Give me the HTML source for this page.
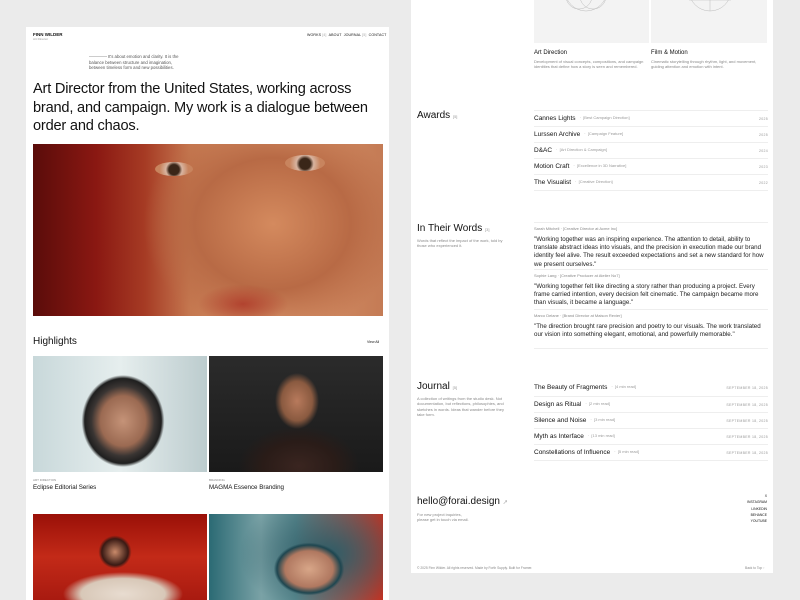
<!DOCTYPE html>
<html><head><meta charset="utf-8"><style>
*{margin:0;padding:0;box-sizing:border-box}
body{width:800px;height:600px;background:#ebebeb;position:relative;overflow:hidden;font-family:"Liberation Sans","Noto Sans CJK SC",sans-serif;color:#111}
.a{position:absolute}
.p{background:#fff}
.s{font-size:4px;color:#888}
.row{position:absolute;left:534px;width:234px;border-top:1px solid #eee;height:16px;white-space:nowrap}
.row b{font-weight:normal;font-size:6.5px;color:#111;position:absolute;left:0;top:4px}
.row b i{font-style:normal;font-size:4px;color:#999;margin-left:4px;vertical-align:1px}
.row u{text-decoration:none;font-size:3.5px;color:#999;position:absolute;right:0;top:6px;letter-spacing:.3px}
</style></head><body>
<div class="a p" style="left:26px;top:27px;width:363px;height:573px"></div>
<div class="a" style="left:33px;top:32px;font-size:4.5px;font-weight:bold">FINN WILDER</div>
<div class="a" style="left:33px;top:37px;font-size:3px;color:#999">Art Director</div>
<div class="a" style="left:307px;top:33px;font-size:3.6px;white-space:nowrap;letter-spacing:.1px">WORKS <span style="color:#aaa">[4]</span> &nbsp;ABOUT &nbsp;JOURNAL <span style="color:#aaa">[5]</span> &nbsp;CONTACT</div>
<div class="a" style="left:89px;top:56px;width:18px;border-top:1px solid #ccc"></div>
<div class="a" style="left:89px;top:54px;width:100px;font-size:4.3px;line-height:5.6px;color:#555;text-indent:19px">It's about emotion and clarity. It is the balance between structure and imagination, between timeless form and new possibilities.</div>
<div class="a" style="left:33px;top:80px;white-space:nowrap;font-size:14.6px;line-height:18.5px;letter-spacing:-.2px">Art Director from the United States, working across<br>brand, and campaign. My work is a dialogue between<br>order and chaos.</div>
<div class="a" style="left:33px;top:144px;width:350px;height:172px;background:radial-gradient(ellipse 60px 40px at 305px 300px,#e0a07d,transparent),radial-gradient(ellipse 50px 22px at 210px 160px,#b2432f,transparent 90%),radial-gradient(ellipse 130px 110px at 240px 80px,#d48a5e,#b86a45 60%,transparent),linear-gradient(90deg,#5a0c0a 0%,#8a1812 18%,#a63b24 32%,#c57850 45%,#d9946a 70%,#c47b55 100%)"></div>
<div class="a" style="left:155px;top:162px;width:38px;height:14px;border-radius:50%;background:radial-gradient(circle at 50% 55%,#3a2618 25%,#d8b4a0 40%,#c8845e 70%)"></div>
<div class="a" style="left:285px;top:155px;width:40px;height:16px;border-radius:50%;background:radial-gradient(circle at 50% 55%,#3a2618 25%,#d8b4a0 40%,#c8845e 70%)"></div>
<div class="a" style="left:33px;top:336px;font-size:10px">Highlights</div>
<div class="a" style="left:367px;top:340px;font-size:3.5px">View All</div>
<div class="a" style="left:33px;top:356px;width:174px;height:116px;background:radial-gradient(ellipse 45px 50px at 90px 65px,#c59378,#9b6a52 50%,#3a3533 70%,#1f1f1f 85%,transparent 92%),linear-gradient(90deg,#c8d8da,#e6eeee 50%,#bcccce)"></div>
<div class="a" style="left:209px;top:356px;width:174px;height:116px;background:radial-gradient(ellipse 22px 28px at 88px 45px,#b87a5c,#8a5a40 70%,transparent),radial-gradient(ellipse 60px 40px at 90px 110px,#3a2520,#2a1c18 60%,transparent),linear-gradient(#2b2b2b,#1a1a1a)"></div>
<div class="a" style="left:33px;top:478px;font-size:3px;color:#888">ART DIRECTION</div>
<div class="a" style="left:33px;top:484px;font-size:6.2px">Eclipse Editorial Series</div>
<div class="a" style="left:209px;top:478px;font-size:3px;color:#888">BRANDING</div>
<div class="a" style="left:209px;top:484px;font-size:6.2px">MAGMA Essence Branding</div>
<div class="a" style="left:33px;top:514px;width:174px;height:86px;background:radial-gradient(ellipse 60px 22px at 90px 80px,#e8dcd0,#d8c8b8 70%,transparent),radial-gradient(ellipse 22px 22px at 82px 38px,#c98a6a,#3a1a14 60%,transparent 75%),linear-gradient(#9a1008,#c32a18 50%,#a81a10)"></div>
<div class="a" style="left:209px;top:514px;width:174px;height:86px;background:radial-gradient(ellipse 40px 30px at 100px 55px,#d8a688,#b07860 60%,#1e4650 80%,transparent 88%),radial-gradient(ellipse 90px 60px at 120px 40px,#2f5c66,transparent),linear-gradient(90deg,#2b6a74,#7aa2a6 30%,#5a8a90 50%,#c8301f 100%)"></div>
<div class="a p" style="left:411px;top:0;width:362px;height:573px"></div>
<div class="a" style="left:534px;top:0;width:115px;height:43px;background:#f3f3f3;overflow:hidden"><svg width="115" height="43"><g fill="none" stroke="#bbb" stroke-width=".5"><circle cx="52" cy="-10" r="21"/><circle cx="45" cy="-4" r="13"/><circle cx="59" cy="-4" r="13"/></g></svg></div>
<div class="a" style="left:651px;top:0;width:116px;height:43px;background:#f3f3f3;overflow:hidden"><svg width="116" height="43"><g fill="none" stroke="#bbb" stroke-width=".5"><circle cx="59" cy="-10" r="21"/><line x1="38" y1="0" x2="80" y2="0"/><line x1="59" y1="0" x2="59" y2="11"/></g></svg></div>
<div class="a" style="left:534px;top:50px;font-size:6px">Art Direction</div>
<div class="a" style="left:534px;top:59px;width:110px;font-size:4px;line-height:5.3px;color:#888">Development of visual concepts, compositions, and campaign identities that define how a story is seen and remembered.</div>
<div class="a" style="left:651px;top:50px;font-size:6px">Film &amp; Motion</div>
<div class="a" style="left:651px;top:59px;width:112px;font-size:4px;line-height:5.3px;color:#888">Cinematic storytelling through rhythm, light, and movement, guiding attention and emotion with intent.</div>
<div class="a" style="left:417px;top:110px;font-size:10px">Awards <span style="font-size:4px;color:#999">[5]</span></div>
<div class="row" style="top:110px"><b>Cannes Lights<i>·&nbsp; [Best Campaign Direction]</i></b><u>2025</u></div>
<div class="row" style="top:126px"><b>Lurssen Archive<i>·&nbsp; [Campaign Feature]</i></b><u>2025</u></div>
<div class="row" style="top:142px"><b>D&amp;AC<i>·&nbsp; [Art Direction &amp; Campaign]</i></b><u>2024</u></div>
<div class="row" style="top:158px"><b>Motion Craft<i>·&nbsp; [Excellence in 3D Narrative]</i></b><u>2023</u></div>
<div class="row" style="top:174px"><b>The Visualist<i>·&nbsp; [Creative Direction]</i></b><u>2022</u></div>
<div class="row" style="top:190px;height:1px"></div>
<div class="a" style="left:417px;top:223px;font-size:10px">In Their Words <span style="font-size:4px;color:#999">[3]</span></div>
<div class="a" style="left:417px;top:238px;width:90px;font-size:4px;line-height:5.3px;color:#888">Words that reflect the impact of the work, told by those who experienced it.</div>
<div class="row" style="top:222px;height:auto;padding-top:3px;white-space:normal"><div class="s">Sarah Mitchell · [Creative Director at Acme Inc]</div><div style="font-size:6.2px;line-height:8.2px;margin-top:5px;color:#222">"Working together was an inspiring experience. The attention to detail, ability to translate abstract ideas into visuals, and the precision in execution made our brand identity feel alive. The result exceeded expectations and set a new standard for how we present ourselves."</div></div>
<div class="row" style="top:269px;height:auto;padding-top:3px;white-space:normal"><div class="s">Sophie Lang · [Creative Producer at Atelier No7]</div><div style="font-size:6.2px;line-height:8.2px;margin-top:5px;color:#222">"Working together felt like directing a story rather than producing a project. Every frame carried intention, every decision felt cinematic. The campaign became more than visuals, it became a language."</div></div>
<div class="row" style="top:309px;height:auto;padding-top:3px;white-space:normal"><div class="s">Marco Delane · [Brand Director at Maison Revier]</div><div style="font-size:6.2px;line-height:8.2px;margin-top:5px;color:#222">"The direction brought rare precision and poetry to our visuals. The work translated our vision into something elegant, emotional, and powerfully memorable."</div></div>
<div class="row" style="top:348px;height:1px"></div>
<div class="a" style="left:417px;top:381px;font-size:10px">Journal <span style="font-size:4px;color:#999">[5]</span></div>
<div class="a" style="left:417px;top:396px;width:90px;font-size:4px;line-height:5.3px;color:#888">A collection of writings from the studio desk. Not documentation, but reflections, philosophies, and sketches in words. Ideas that wander before they take form.</div>
<div class="row" style="top:380px;border-top:none"><b>The Beauty of Fragments<i>·&nbsp; [4 min read]</i></b><u>SEPTEMBER 18, 2025</u></div>
<div class="row" style="top:396px"><b>Design as Ritual<i>·&nbsp; [2 min read]</i></b><u>SEPTEMBER 18, 2025</u></div>
<div class="row" style="top:412px"><b>Silence and Noise<i>·&nbsp; [3 min read]</i></b><u>SEPTEMBER 18, 2025</u></div>
<div class="row" style="top:428px"><b>Myth as Interface<i>·&nbsp; [13 min read]</i></b><u>SEPTEMBER 18, 2025</u></div>
<div class="row" style="top:444px"><b>Constellations of Influence<i>·&nbsp; [5 min read]</i></b><u>SEPTEMBER 18, 2025</u></div>
<div class="row" style="top:460px;height:1px"></div>
<div class="a" style="left:417px;top:496px;font-size:10px">hello@forai.design <span style="font-size:5px;color:#888">↗</span></div>
<div class="a" style="left:417px;top:512px;font-size:4px;line-height:5.3px;color:#888">For new project inquiries,<br>please get in touch via email.</div>
<div class="a" style="left:730px;top:493px;width:37px;text-align:right;font-size:3.4px;line-height:6.3px">X<br>INSTAGRAM<br>LINKEDIN<br>BEHANCE<br>YOUTUBE</div>
<div class="a" style="left:417px;top:566px;font-size:3.3px;color:#888">© 2025 Finn Wilder. All rights reserved. Made by Forth Supply. Built for Framer.</div>
<div class="a" style="left:745px;top:566px;font-size:3.3px;color:#888">Back to Top ↑</div>
</body></html>
